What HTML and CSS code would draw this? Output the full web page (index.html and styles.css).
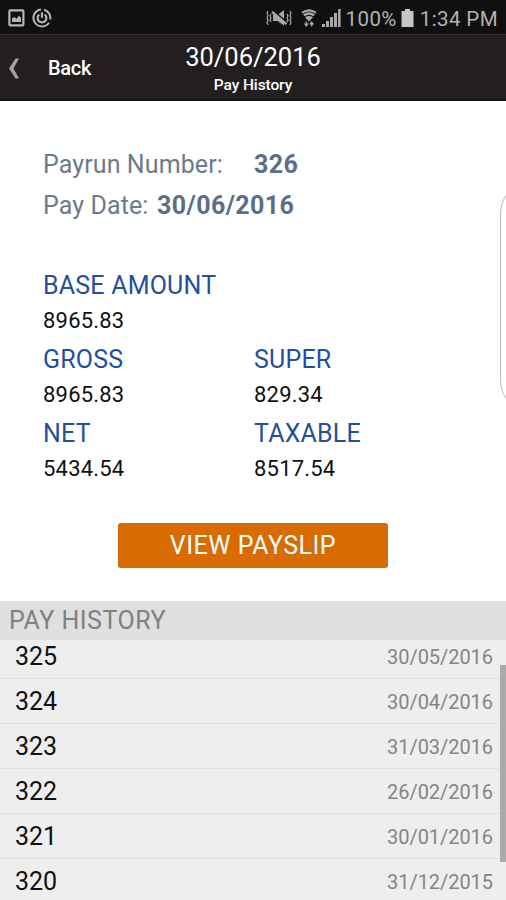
FILE: index.html
```
<!DOCTYPE html>
<html lang="en">
<head>
    <meta charset="utf-8">
    <title>Pay History</title>
    <link rel="stylesheet" href="styles.css">
</head>
<body>
    <div class="screen">
        <div class="status-bar">
            <svg class="icon-image" width="17" height="18" viewBox="0 0 17 18">
                <rect x="1.4" y="1.4" width="14" height="15" rx="1" fill="none" stroke="#b5b5b5" stroke-width="2.2"/>
                <path d="M4 13V9.5L6.5 8l2 2L11 6.5l2 2.5v4z" fill="#b5b5b5"/>
            </svg>
            <svg class="icon-data" width="20" height="20" viewBox="0 0 20 20" fill="none" stroke="#b5b5b5">
                <path d="M12 1.7A8.5 8.5 0 0 1 18.2 11.5M17 14.8A8.5 8.5 0 0 1 3 14.8M3 14.8A8.5 8.5 0 0 1 9 1.5" stroke-width="2"/>
                <path d="M12.7 6.6a4.4 4.4 0 1 1-5.4 0M10 4.2v5.6" stroke-width="2.2"/>
            </svg>
            <div class="status-right">
                <svg class="icon-mute" width="26" height="18" viewBox="0 0 26 18" fill="none" stroke="#a9a9a9">
                    <path d="M7 6h4.5L18 1v15.5L11.5 12H7z" fill="#a9a9a9" stroke="none"/>
                    <path d="M7.5 1.8l13 11" stroke="#111" stroke-width="1.6"/>
                    <path d="M6 2.8l14.5 12.4" stroke-width="2.4"/>
                    <path d="M2 2l-1 2.3 1 2.3L1 9l1 2.3-1 2.3 1 2.4M5 5L4 7l1 2-1 2 1 2M24 2l1 2.3-1 2.3L25 9l-1 2.3 1 2.3-1 2.4M21 5l1 2-1 2 1 2-1 2" stroke-width="1.2"/>
                </svg>
                <svg class="icon-wifi" width="16" height="19" viewBox="0 0 16 19" fill="none" stroke="#a9a9a9">
                    <path d="M1 3.8Q8-1.2 15 3.8M2.8 6.4Q8 2.6 13.2 6.4" stroke-width="2.2"/>
                    <path d="M4 8.2Q8 5.6 12 8.2L8 12.5z" fill="#a9a9a9" stroke="none"/>
                    <path d="M5.3 12.5v3M10.7 14v3.5" stroke-width="1.4"/>
                    <path d="M2.8 14.5h5l-2.5 3.5zM8.2 15.5h5L10.7 12z" fill="#a9a9a9" stroke="none"/>
                </svg>
                <svg class="icon-signal" width="19" height="18" viewBox="0 0 19 18" fill="#a9a9a9">
                    <path d="M0 15h3v3H0zM4 12h3v6H4zM8 8h3v10H8zM12 4h3v14h-3zM16 0h2.6v18H16z"/>
                </svg>
                <span class="battery-text">100%</span>
                <svg class="icon-battery" width="13" height="18" viewBox="0 0 13 18" fill="#c6c6c6">
                    <path d="M4 0h5v2h3.5v16H.5V2H4z"/>
                </svg>
                <span class="time">1:34 PM</span>
            </div>
        </div>

        <div class="header">
            <a class="back">
                <svg width="12" height="21" viewBox="0 0 12 21" fill="#a3a1a1">
                    <path d="M7.5 0.5H11L5.5 10.5 11 20.5H7.5L1 10.5z"/>
                </svg>
                <span>Back</span>
            </a>
            <div class="title">
                <h1>30/06/2016</h1>
                <p>Pay History</p>
            </div>
        </div>

        <div class="details">
            <div class="payrun">
                <div class="payrun-row"><span class="payrun-label">Payrun Number:</span><b>326</b></div>
                <div class="payrun-row"><span class="date-label">Pay Date:</span><b>30/06/2016</b></div>
            </div>

            <div class="amounts">
                <div class="amount wide"><h2>BASE AMOUNT</h2><p>8965.83</p></div>
                <div class="amount"><h2>GROSS</h2><p>8965.83</p></div>
                <div class="amount"><h2>SUPER</h2><p>829.34</p></div>
                <div class="amount"><h2>NET</h2><p>5434.54</p></div>
                <div class="amount"><h2>TAXABLE</h2><p>8517.54</p></div>
            </div>

            <button class="btn-payslip">VIEW PAYSLIP</button>
            <div class="edge-panel"></div>
        </div>

        <h3 class="history-title">PAY HISTORY</h3>
        <div class="history">
            <ul>
                <li><span>325</span><time>30/05/2016</time></li>
                <li><span>324</span><time>30/04/2016</time></li>
                <li><span>323</span><time>31/03/2016</time></li>
                <li><span>322</span><time>26/02/2016</time></li>
                <li><span>321</span><time>30/01/2016</time></li>
                <li><span>320</span><time>31/12/2015</time></li>
            </ul>
            <div class="scrollbar"></div>
        </div>
    </div>
</body>
</html>
```

FILE: styles.css
```
* {
    box-sizing: border-box;
}

body {
    margin: 0;
    font-family: Roboto, "Liberation Sans", sans-serif;
    background: #fff;
    color: #111;
}

h1, h2, h3, p, ul {
    margin: 0;
    padding: 0;
    font-weight: normal;
}

.screen {
    width: 506px;
    height: 900px;
    overflow: hidden;
    display: flex;
    flex-direction: column;
}

.status-bar {
    height: 34px;
    flex: none;
    background: #101010;
    color: #b2b2b2;
    display: flex;
    align-items: center;
    padding: 2px 8px 0 8px;
    font-size: 20.5px;
}

.icon-data {
    margin-left: 7px;
}

.status-right {
    display: flex;
    align-items: center;
    margin-left: auto;
}

.status-right span {
    padding-top: 2px;
}

.icon-wifi {
    margin-left: 9px;
}

.icon-signal {
    margin-left: 5px;
}

.battery-text {
    margin-left: 5px;
    letter-spacing: 0.4px;
}

.icon-battery {
    margin: 0 6px 0 4px;
}

.time {
    letter-spacing: 0.4px;
}

.header {
    height: 67px;
    flex: none;
    display: grid;
    grid-template-columns: 1fr auto 1fr;
    background: #231f20;
    color: #fff;
    border-top: 1px solid #332f30;
    border-bottom: 2px solid #111;
}

.back {
    display: flex;
    align-items: center;
    gap: 28px;
    padding: 2px 0 0 8px;
    font-size: 20px;
    font-weight: 500;
    letter-spacing: -0.3px;
}

.title {
    text-align: center;
}

.title h1 {
    font-size: 25.5px;
    line-height: 30px;
    padding-top: 7px;
}

.title p {
    font-size: 15.5px;
    font-weight: 500;
    line-height: 20px;
    padding-top: 3px;
    letter-spacing: -0.1px;
}

.details {
    position: relative;
    height: 500px;
    flex: none;
    padding: 43px 0 0 43px;
    overflow: hidden;
}

.payrun {
    color: #6b7b8e;
    font-size: 25px;
    line-height: 41px;
    letter-spacing: 0.1px;
}

.payrun-row {
    display: flex;
}

.payrun-row b {
    color: #5a6f86;
    letter-spacing: 0.4px;
}

.payrun-label {
    width: 211px;
}

.date-label {
    width: 114px;
}

.amounts {
    display: grid;
    grid-template-columns: 211px 1fr;
    margin-top: 42px;
}

.amount {
    height: 74px;
}

.amount.wide {
    grid-column: 1 / 3;
}

.amount h2 {
    color: #24509a;
    font-size: 25px;
    line-height: 36px;
    letter-spacing: 0.2px;
}

.amount p {
    font-size: 22px;
    line-height: 34px;
    letter-spacing: 0.2px;
}

.btn-payslip {
    display: block;
    width: 270px;
    height: 45px;
    margin: 33px 0 0 75px;
    padding: 0;
    border: none;
    border-radius: 3px;
    background: #d86c00;
    color: #fff;
    font-family: inherit;
    font-size: 25px;
    letter-spacing: 0.5px;
}

.edge-panel {
    position: absolute;
    top: 90px;
    right: -20px;
    width: 26px;
    height: 212px;
    border: 1px solid #bbb;
    border-radius: 18px / 34px;
}

.history-title {
    height: 39px;
    flex: none;
    padding-left: 9px;
    background: #dfdfdf;
    color: #808080;
    font-size: 25px;
    line-height: 40px;
    letter-spacing: 0.5px;
}

.history {
    position: relative;
    flex: 1;
    background: #eee;
    overflow: hidden;
}

.history ul {
    list-style: none;
    margin-top: -6px;
}

.history li {
    display: flex;
    align-items: center;
    justify-content: space-between;
    height: 45px;
    padding: 1px 13px 0 15px;
    border-bottom: 1px solid #e1e1e1;
    font-size: 25px;
}

.history time {
    font-size: 20px;
    color: #858585;
    letter-spacing: -0.05px;
}

.scrollbar {
    position: absolute;
    top: 25px;
    right: 0;
    width: 6px;
    height: 197px;
    background: #aaa;
}
```
